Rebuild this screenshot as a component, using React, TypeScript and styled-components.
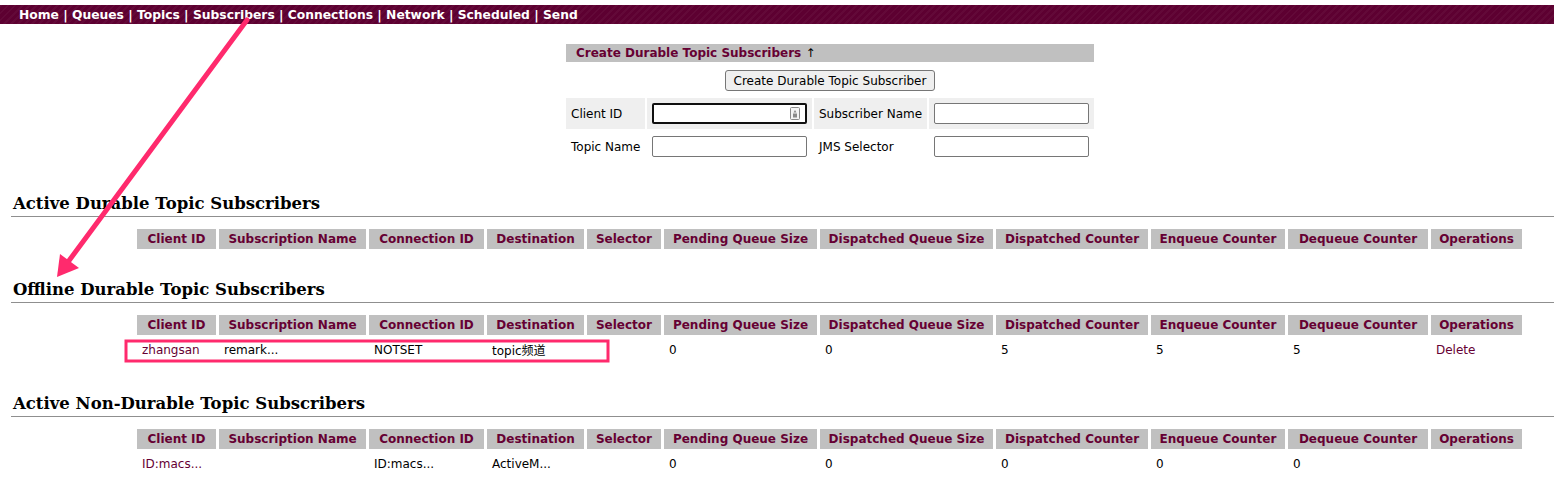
import React from 'react';
import styled, { createGlobalStyle } from 'styled-components';

const GlobalStyle = createGlobalStyle`
  html, body { margin: 0; padding: 0; background: #ffffff; }
  body {
    font-family: "DejaVu Sans", Verdana, "Noto Sans CJK SC", sans-serif;
    font-size: 12px;
    color: #000000;
  }
`;

const MAROON = '#660033';

const Page = styled.div`
  position: relative;
  width: 1554px;
  height: 478px;
  overflow: hidden;
  padding-top: 5px;
  box-sizing: border-box;
`;

const NavBar = styled.nav`
  height: 19px;
  background-color: #5d0031;
  background-image: repeating-linear-gradient(
    135deg,
    rgba(255, 255, 255, 0.035) 0 2px,
    transparent 2px 5px
  );
  padding-left: 19px;
  display: flex;
  align-items: center;
  color: #ffffff;
  font-weight: bold;
  font-size: 12.3px;
  white-space: pre;
`;

const NavLink = styled.a`
  color: #ffffff;
  text-decoration: none;
`;

const Content = styled.div`
  padding-left: 11px;
`;

const CreateBox = styled.div`
  width: 528px;
  margin: 20px 0 0 555px;
`;

const TitleBar = styled.div`
  height: 18px;
  line-height: 18px;
  background: #c0c0c0;
  padding-left: 10px;
  color: ${MAROON};
  font-weight: bold;
  font-size: 12px;
`;

const TitleArrow = styled.span`
  color: #000000;
  font-weight: normal;
`;

const ButtonRow = styled.div`
  text-align: center;
  padding-top: 8px;
`;

const Button = styled.button`
  height: 21px;
  padding: 0 8px;
  font-family: "DejaVu Sans", Verdana, sans-serif;
  font-size: 12px;
  color: #000000;
  background: #efefef;
  border: 1px solid #767676;
  border-radius: 3px;
`;

const FormTable = styled.table`
  border-collapse: separate;
  border-spacing: 2px;
  margin: 5px 0 0 -2px;
  table-layout: fixed;
  width: 532px;
`;

const FormRow = styled.tr<{ $shaded?: boolean }>`
  background: ${(p) => (p.$shaded ? '#efefef' : 'transparent')};
`;

const LabelCell = styled.td`
  height: 21px;
  padding: 5px 5px;
  font-size: 12px;
  white-space: nowrap;
`;

const InputCell = styled.td`
  padding: 5px 5px;
  position: relative;
`;

const TextInput = styled.input<{ $focused?: boolean }>`
  display: block;
  box-sizing: border-box;
  width: 155px;
  height: 21px;
  border: ${(p) => (p.$focused ? '2px solid #101010' : '1px solid #767676')};
  border-radius: 2px;
  background: #ffffff;
  padding: 0 2px;
  font-family: "DejaVu Sans", Verdana, sans-serif;
  font-size: 12px;
  outline: none;
`;

const KeyIcon = styled.svg`
  position: absolute;
  right: 12px;
  top: 9px;
`;

const SectionTitle = styled.h2<{ $top: number }>`
  margin: ${(p) => p.$top}px 0 0 0;
  padding: 0 0 1px 2px;
  font-family: "DejaVu Serif", Georgia, serif;
  font-size: 16.5px;
  font-weight: bold;
  line-height: 23px;
  border-bottom: 1px solid #8f8f8f;
`;

const DataTable = styled.table`
  border-collapse: separate;
  border-spacing: 3px;
  table-layout: fixed;
  margin: 9px 0 0 123px;
`;

const HeadCell = styled.th`
  height: 20px;
  padding: 0;
  background: #c0c0c0;
  color: ${MAROON};
  font-weight: bold;
  font-size: 12px;
  text-align: center;
  white-space: nowrap;
`;

const DataCell = styled.td`
  height: 23px;
  padding: 0 0 0 5px;
  font-size: 12px;
  text-align: left;
  white-space: nowrap;
  overflow: hidden;
`;

const CellLink = styled.a`
  color: ${MAROON};
  text-decoration: none;
`;

const Col = styled.col<{ $w: number }>`
  width: ${(p) => p.$w}px;
`;

const Overlay = styled.svg`
  position: absolute;
  left: 0;
  top: 0;
  pointer-events: none;
`;

const columns: [string, number][] = [
  ['Client ID', 79],
  ['Subscription Name', 147],
  ['Connection ID', 115],
  ['Destination', 97],
  ['Selector', 74],
  ['Pending Queue Size', 153],
  ['Dispatched Queue Size', 173],
  ['Dispatched Counter', 152],
  ['Enqueue Counter', 134],
  ['Dequeue Counter', 140],
  ['Operations', 91],
];

type Cell = { text: string; link?: boolean };
const c = (text: string, link = false): Cell => ({ text, link });

const offlineRows: Cell[][] = [
  [
    c('zhangsan', true),
    c('remark...'),
    c('NOTSET'),
    c('topic频道'),
    c(''),
    c('0'),
    c('0'),
    c('5'),
    c('5'),
    c('5'),
    c('Delete', true),
  ],
];

const nonDurableRows: Cell[][] = [
  [
    c('ID:macs...', true),
    c(''),
    c('ID:macs...'),
    c('ActiveM...'),
    c(''),
    c('0'),
    c('0'),
    c('0'),
    c('0'),
    c('0'),
    c(''),
  ],
];

const SubscriberTable: React.FC<{ rows: Cell[][] }> = ({ rows }) => (
  <DataTable>
    <colgroup>
      {columns.map(([name, w]) => (
        <Col key={name} $w={w} />
      ))}
    </colgroup>
    <thead>
      <tr>
        {columns.map(([name]) => (
          <HeadCell key={name}>{name}</HeadCell>
        ))}
      </tr>
    </thead>
    <tbody>
      {rows.map((row, i) => (
        <tr key={i}>
          {row.map((cell, j) => (
            <DataCell key={j}>
              {cell.link ? <CellLink href="#">{cell.text}</CellLink> : cell.text}
            </DataCell>
          ))}
        </tr>
      ))}
    </tbody>
  </DataTable>
);

const navItems = ['Home', 'Queues', 'Topics', 'Subscribers', 'Connections', 'Network', 'Scheduled', 'Send'];

export default function App() {
  return (
    <Page>
      <GlobalStyle />
      <NavBar>
        {navItems.map((item, i) => (
          <React.Fragment key={item}>
            {i > 0 && ' | '}
            <NavLink href="#">{item}</NavLink>
          </React.Fragment>
        ))}
      </NavBar>
      <Content>
        <CreateBox>
          <TitleBar>
            Create Durable Topic Subscribers <TitleArrow>↑</TitleArrow>
          </TitleBar>
          <ButtonRow>
            <Button>Create Durable Topic Subscriber</Button>
          </ButtonRow>
          <FormTable>
            <colgroup>
              <Col $w={79} />
              <Col $w={165} />
              <Col $w={113} />
              <Col $w={165} />
            </colgroup>
            <tbody>
              <FormRow $shaded>
                <LabelCell>Client ID</LabelCell>
                <InputCell>
                  <TextInput $focused />
                  <KeyIcon width="10" height="13" viewBox="0 0 10 13">
                    <rect x="0.5" y="0.5" width="9" height="12" rx="1" fill="#f4f4f4" stroke="#8a8a8a" />
                    <path d="M5 3 L6.5 5.5 L3.5 5.5 Z" fill="#8a8a8a" />
                    <rect x="3" y="6.5" width="4" height="4" fill="#8a8a8a" />
                  </KeyIcon>
                </InputCell>
                <LabelCell>Subscriber Name</LabelCell>
                <InputCell>
                  <TextInput />
                </InputCell>
              </FormRow>
              <FormRow>
                <LabelCell>Topic Name</LabelCell>
                <InputCell>
                  <TextInput />
                </InputCell>
                <LabelCell>JMS Selector</LabelCell>
                <InputCell>
                  <TextInput />
                </InputCell>
              </FormRow>
            </tbody>
          </FormTable>
        </CreateBox>

        <SectionTitle $top={28}>Active Durable Topic Subscribers</SectionTitle>
        <SubscriberTable rows={[]} />

        <SectionTitle $top={26}>Offline Durable Topic Subscribers</SectionTitle>
        <SubscriberTable rows={offlineRows} />

        <SectionTitle $top={28}>Active Non-Durable Topic Subscribers</SectionTitle>
        <SubscriberTable rows={nonDurableRows} />
      </Content>

      <Overlay width="1554" height="478" viewBox="0 0 1554 478">
        <line x1="247" y1="20" x2="68" y2="262" stroke="#ff2a6d" strokeWidth="5" strokeLinecap="round" />
        <polygon points="57,277 60,254 79,268" fill="#ff2a6d" />
        <rect x="126" y="341" width="482" height="20" fill="none" stroke="#ff2a6d" strokeWidth="3" />
      </Overlay>
    </Page>
  );
}
